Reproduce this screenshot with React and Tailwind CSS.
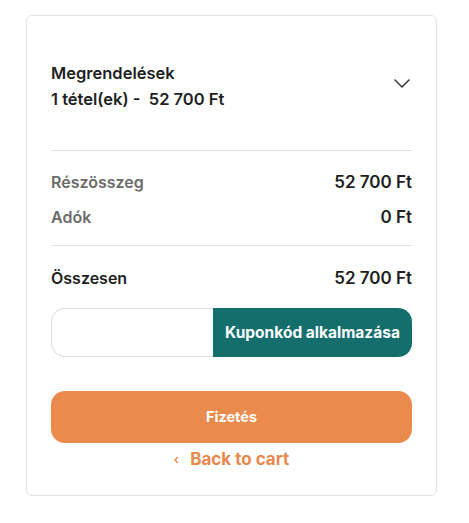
import React, { useState } from 'react';

const Chevron = ({ className }) => (
  <svg className={className} viewBox="0 0 16 9" fill="none" stroke="currentColor" strokeWidth="1.4" strokeLinecap="round" strokeLinejoin="round">
    <path d="M1 1l7 7 7-7" />
  </svg>
);

const Row = ({ label, value, muted }) => (
  <div className="flex items-center justify-between leading-6">
    <span className={muted ? 'text-[#6b6b6b]' : 'text-[#1f1f1f]'}>{label}</span>
    <span className="text-[17px] text-[#1f1f1f]">{value}</span>
  </div>
);

const App = () => {
  const [coupon, setCoupon] = useState('');

  return (
    <div className="min-h-[523px] bg-white pl-[26px] pt-[15px] font-['Inter',sans-serif] text-[16px] font-semibold">
      <div className="w-[411px] h-[481px] rounded-md border border-[#e3e3e3] px-[24px]">
        {/* summary header */}
        <div className="flex items-center justify-between border-b border-[#e0e0e0] pt-[44px] pb-[38px]">
          <div className="text-[16.5px] leading-[26px] text-[#1f1f1f]">
            <div>Megrendelések</div>
            <div>1 tétel(ek) -&nbsp; 52 700 Ft</div>
          </div>
          <Chevron className="mr-[2px] mt-[-6px] h-[9px] w-[16px] text-[#2a2a2a]" />
        </div>

        {/* subtotal + tax */}
        <div className="flex flex-col gap-[11px] border-b border-[#e0e0e0] pt-[19px] pb-[16px]">
          <Row label="Részösszeg" value="52 700 Ft" muted />
          <Row label="Adók" value="0 Ft" muted />
        </div>

        <div className="pt-[20px]">
          <Row label="Összesen" value="52 700 Ft" />
        </div>

        {/* coupon */}
        <div className="mt-[18px] flex h-[49px]">
          <input
            value={coupon}
            onChange={(e) => setCoupon(e.target.value)}
            className="w-[162px] rounded-l-[14px] border border-r-0 border-[#dedede] px-3 text-sm outline-none"
          />
          <button className="flex-1 rounded-r-[14px] bg-[#136e6c] text-[15.5px] font-bold text-white">
            Kuponkód alkalmazása
          </button>
        </div>

        {/* checkout */}
        <button className="mt-[34px] h-[52px] w-full rounded-[14px] bg-[#eb8a4d] text-[14.5px] font-bold text-white">
          Fizetés
        </button>
        <div className="mt-[4px] flex items-center justify-center gap-[11px] leading-6 text-[#e8894f]">
          <span className="text-[13px]">‹</span>
          <span className="text-[17px] font-bold">Back to cart</span>
        </div>
      </div>
    </div>
  );
};

export default App;
